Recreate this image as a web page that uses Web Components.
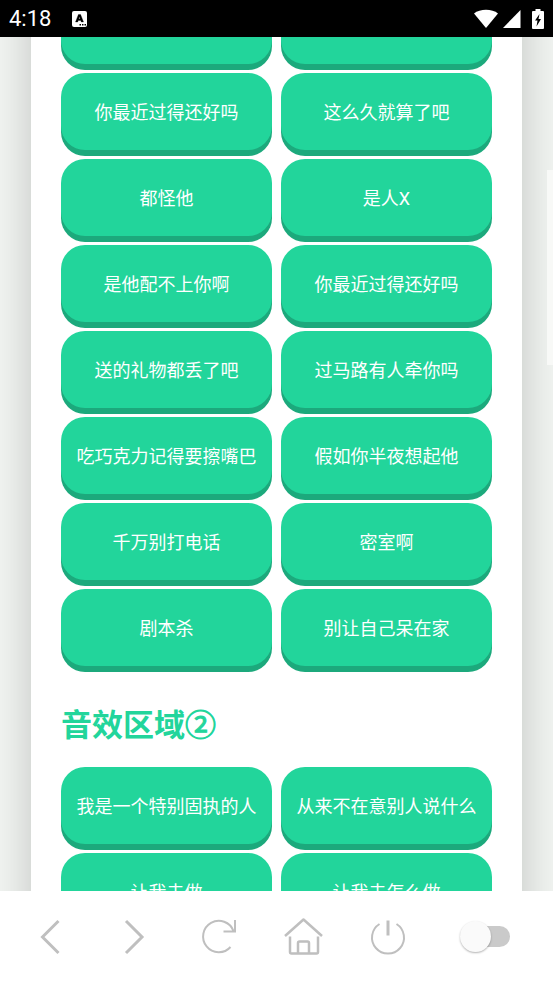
<!DOCTYPE html>
<html lang="zh-CN">
<head>
<meta charset="utf-8">
<meta name="viewport" content="width=device-width, initial-scale=1">
<title>音效</title>
<style>
  html, body { height: 100%; margin: 0; }
  body { font-family: "Noto Sans CJK SC", sans-serif; }
</style>
</head>
<body>
<sound-app></sound-app>

<template id="status-bar-t">
  <style>
    :host { display: flex; align-items: center; justify-content: space-between; height: 37px; padding: 0 9px; box-sizing: border-box; background: #000; color: #fff; font: 400 22px/37px Roboto, sans-serif; }
    div { display: flex; align-items: center; }
    .left { gap: 21px; }
    .right { gap: 5px; }
    svg { display: block; fill: #fff; }
    .battery { margin-left: 6px; }
  </style>
  <div class="left">
    <span>4:18</span>
    <svg width="15" height="17" viewBox="0 0 15 17"><rect width="15" height="16" y="1" rx="2"/><path fill-rule="evenodd" d="M3.500 12 6.400 4.500h2.200L11.500 12H9.300L8.800 10.500H6.200L5.700 12zM6.800 8.800h1.400L7.500 6.700z" fill="#000" stroke="#000" stroke-width=".3"/><path d="M7.500 14h1.500v1.500H7.500zM10 14h1.500v1.500H10zM12.500 14H14v1.500h-1.500z" fill="#000"/></svg>
  </div>
  <div class="right">
    <svg width="24" height="19" viewBox="0 0 24 19"><path d="M0 4.500C6-.4 18-.4 24 4.500L12 19z"/></svg>
    <svg width="18" height="18" viewBox="0 0 18 18"><path d="M17.500 0v18H0z"/></svg>
    <svg class="battery" width="12" height="20" viewBox="0 0 12 20"><path d="M3.500 0h5v2H11q1 0 1 1v16q0 1-1 1H1q-1 0-1-1V3q0-1 1-1h2.500z"/><path d="M7.500 5 3 11.500h2.500L4.500 17.500 9 10H6.500z" fill="#000"/></svg>
  </div>
</template>

<template id="sound-button-t">
  <style>
    :host { display: block; min-width: 0; }
    button { display: block; width: 100%; height: 77px; padding: 1px 8px 0; border: 0; border-radius: 24px; background: #22d59b; box-shadow: 0 6px #1ca97c; color: #fff; font: 18px/27px Roboto, "Noto Sans CJK SC", sans-serif; white-space: nowrap; cursor: pointer; }
  </style>
  <button type="button"><slot></slot></button>
</template>

<template id="sound-section-t">
  <style>
    :host { display: block; }
    h2 { margin: 34px 0 22px; color: #22d59b; font: bold 31px/45px "Noto Sans CJK SC", sans-serif; }
    h2:empty { display: none; }
    .circled { font-weight: 400; -webkit-text-stroke: 1px; }
    div { display: grid; grid-template-columns: 1fr 1fr; gap: 9px; }
  </style>
  <h2></h2>
  <div><slot></slot></div>
</template>

<template id="nav-bar-t">
  <style>
    :host { display: grid; grid-template-columns: repeat(5, 1fr) 1.3fr; place-items: center; height: 92px; padding: 0 13px 0 8px; box-sizing: border-box; background: #fff; }
    button { display: block; padding: 0; border: 0; background: none; cursor: pointer; }
    svg { display: block; width: 40px; height: 40px; fill: none; stroke: #bfbfbf; stroke-width: 2; }
    .thick { stroke-width: 3; }
    input { appearance: none; position: relative; width: 50px; height: 32px; margin: 0; cursor: pointer; }
    input::before { content: ""; position: absolute; inset: 5px 0 6px 6px; border-radius: 11px; background: #cacaca; }
    input::after { content: ""; position: absolute; left: 0; top: 0; width: 31px; height: 31px; border-radius: 50%; background: #fafafa; box-shadow: 0 1px 2px rgba(0,0,0,.3); }
    input:checked::after { left: 19px; }
  </style>
  <button type="button" aria-label="后退"><svg class="thick" viewBox="0 0 40 40"><path d="M28.500 4 12.500 20l16 16"/></svg></button>
  <button type="button" aria-label="前进"><svg class="thick" viewBox="0 0 40 40"><path d="M11 4l16 16L11 36"/></svg></button>
  <button type="button" aria-label="刷新"><svg viewBox="0 0 40 40"><path d="M34.500 14A15.700 15.700 0 1 0 31.500 30M36 3v11.500H24.500"/></svg></button>
  <button type="button" aria-label="主页"><svg viewBox="0 0 40 40" stroke-linejoin="round"><g stroke-width="2.500"><path d="M1 19 19.500 2.500 38 19M6 19.500V35q0 1.500 1.500 1.500h25Q34 36.500 34 35V19.500M14 36V26q0-1.500 1.500-1.500h8q1.500 0 1.500 1.500v10"/></g></svg></button>
  <button type="button" aria-label="退出"><svg viewBox="0 0 40 40"><path d="M11.500 7A16 16 0 1 0 28.500 7"/><path class="thick" d="M20 3.500v15"/></svg></button>
  <input type="checkbox" role="switch" aria-label="开关">
</template>

<template id="sound-app-t">
  <style>
    :host { display: flex; flex-direction: column; height: 100vh; background: #fff; }
    .view { position: relative; flex: 1; min-height: 0; display: flex; }
    main { flex: 1; overflow: hidden auto; scrollbar-width: none; padding: 0 31px; background: #f1f4f1; }
    article { padding: 0 30px 80px; background: #fff; box-shadow: 0 0 40px rgba(0,0,0,.2); }
    .thumb { position: absolute; right: 0; top: 133px; width: 6px; height: 195px; background: #f8f9f7; }
  </style>
  <status-bar></status-bar>
  <div class="view">
    <main><article></article></main>
    <div class="thumb"></div>
  </div>
  <nav-bar></nav-bar>
</template>

<script>
  class TemplateElement extends HTMLElement {
    constructor() {
      super();
      this.attachShadow({ mode: "open" });
      const t = document.getElementById(this.localName + "-t");
      this.shadowRoot.append(t.content.cloneNode(true));
    }
  }
  class StatusBar extends TemplateElement {}
  class SoundButton extends TemplateElement {}
  class NavBar extends TemplateElement {}
  class SoundSection extends TemplateElement {
    connectedCallback() {
      // Circled numbers use a lighter outline than the heading's characters.
      this.shadowRoot.querySelector("h2").innerHTML =
        (this.getAttribute("heading") || "").replace(/[①-⑳]/g, '<span class="circled">$&</span>');
    }
  }
  const sections = [
    { heading: "", sounds: [
      "", "", "", "",
      "你最近过得还好吗", "这么久就算了吧", "都怪他", "是人X",
      "是他配不上你啊", "你最近过得还好吗", "送的礼物都丢了吧", "过马路有人牵你吗",
      "吃巧克力记得要擦嘴巴", "假如你半夜想起他", "千万别打电话", "密室啊",
      "剧本杀", "别让自己呆在家" ] },
    { heading: "音效区域②", sounds: [
      "我是一个特别固执的人", "从来不在意别人说什么", "让我去做", "让我去怎么做" ] }
  ];
  class SoundApp extends TemplateElement {
    connectedCallback() {
      const article = this.shadowRoot.querySelector("article");
      for (const { heading, sounds } of sections) {
        const section = document.createElement("sound-section");
        section.setAttribute("heading", heading);
        for (const name of sounds) {
          const b = document.createElement("sound-button");
          b.textContent = name;
          section.append(b);
        }
        article.append(section);
      }
      this.shadowRoot.querySelector("main").scrollTop = 136;
    }
  }
  customElements.define("status-bar", StatusBar);
  customElements.define("sound-button", SoundButton);
  customElements.define("sound-section", SoundSection);
  customElements.define("nav-bar", NavBar);
  customElements.define("sound-app", SoundApp);
</script>
</body>
</html>
